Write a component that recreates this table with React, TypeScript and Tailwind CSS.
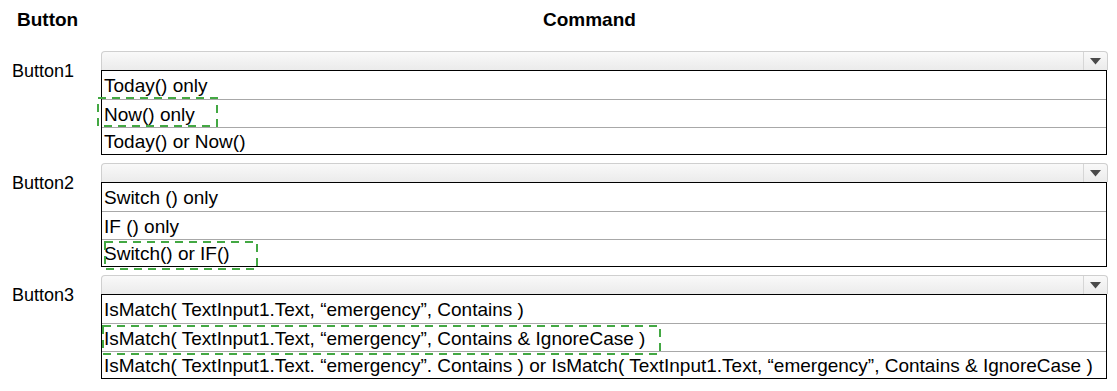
import React from "react";

type Section = { label: string; options: string[] };

const sections: Section[] = [
  { label: "Button1", options: ["Today() only", "Now() only", "Today() or Now()"] },
  { label: "Button2", options: ["Switch () only", "IF () only", "Switch() or IF()"] },
  {
    label: "Button3",
    options: [
      "IsMatch( TextInput1.Text, \u201Cemergency\u201D, Contains )",
      "IsMatch( TextInput1.Text, \u201Cemergency\u201D, Contains & IgnoreCase )",
      "IsMatch( TextInput1.Text. \u201Cemergency\u201D. Contains ) or IsMatch( TextInput1.Text, \u201Cemergency\u201D, Contains & IgnoreCase )",
    ],
  },
];

function DropBar() {
  return (
    <div className="flex h-[19px] w-[1007px] rounded-t-[4px] border border-b-0 border-[#cfcfcf] bg-gradient-to-b from-[#f9f9f9] to-[#ebebeb]">
      <div className="flex-1" />
      <div className="flex w-[24px] items-center justify-center border-l border-[#d6d6d6]">
        <svg width="11" height="7" viewBox="0 0 11 7">
          <path d="M0 0 L11 0 L5.5 6.5 Z" fill="#4a4a4a" />
        </svg>
      </div>
    </div>
  );
}

function OptionList({ options }: { options: string[] }) {
  return (
    <div className="flex w-[1006px] flex-col border border-black bg-white">
      {options.map((o, i) => (
        <div
          key={o}
          className={`flex items-center pl-[2px] pt-[1px] text-[19px] leading-none text-black ${
            i > 0 ? "border-t border-[#a8a8a8]" : ""
          } ${i === 2 ? "h-[27px]" : "h-[28px]"}`}
        >
          {o}
        </div>
      ))}
    </div>
  );
}

function Dashed({ x, y, w, h }: { x: number; y: number; w: number; h: number }) {
  return (
    <svg
      className="pointer-events-none absolute"
      style={{ left: x, top: y, width: w, height: h }}
      width={w}
      height={h}
    >
      <rect
        x={1}
        y={1}
        width={w - 2}
        height={h - 2}
        fill="none"
        stroke="#43a843"
        strokeWidth={2}
        strokeDasharray="8 6"
      />
    </svg>
  );
}

export default function App() {
  return (
    <div
      className="relative h-[391px] w-[1117px] overflow-hidden bg-white text-black"
      style={{ fontFamily: '"Liberation Sans", Arial, sans-serif' }}
    >
      <div className="flex h-[40px] items-center text-[19px] font-bold">
        <div className="w-[102px] pl-[17px]">Button</div>
        <div className="pl-[441px]">Command</div>
      </div>

      <div className="mt-[11px] flex flex-col gap-[8px]">
        {sections.map((s) => (
          <div key={s.label} className="flex">
            <div className="w-[101px] pl-[12px] pt-[11px] text-[18px] leading-none">{s.label}</div>
            <div className="flex flex-col">
              <DropBar />
              <OptionList options={s.options} />
            </div>
          </div>
        ))}
      </div>

      <Dashed x={97} y={97} w={121} h={30} />
      <Dashed x={104} y={241} w={154} h={29} />
      <Dashed x={102} y={325} w={559} h={30} />
    </div>
  );
}
